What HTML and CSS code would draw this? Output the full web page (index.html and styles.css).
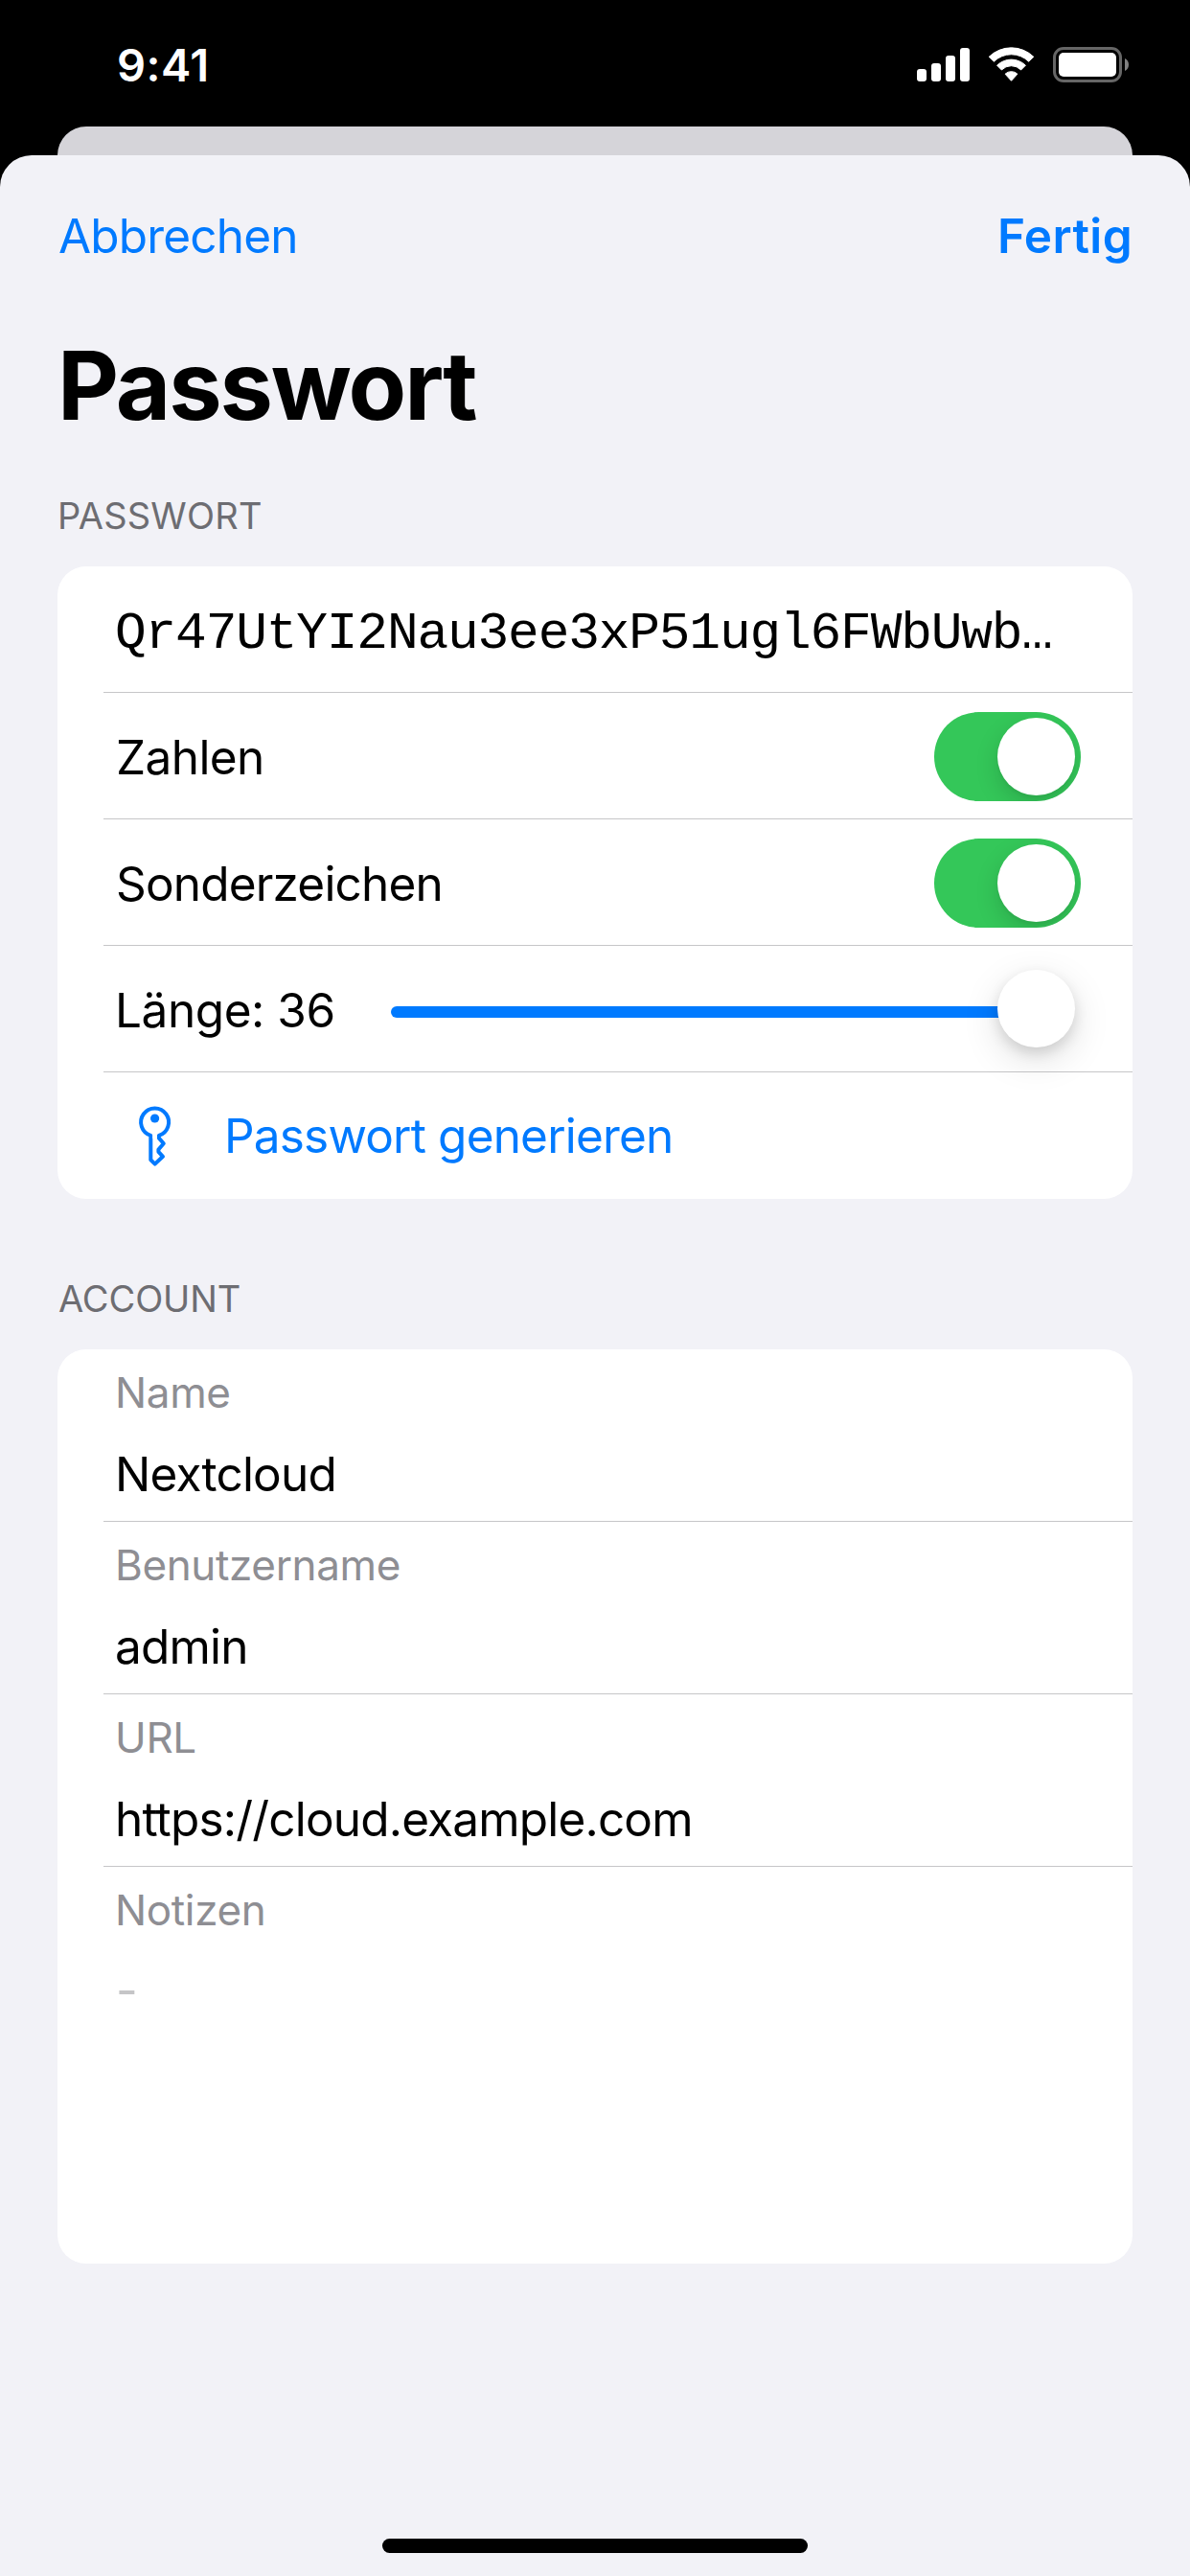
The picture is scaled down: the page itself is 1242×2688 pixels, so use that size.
FILE: index.html
```html
<!DOCTYPE html>
<html lang="de">
<head>
<meta charset="utf-8">
<title>Passwort</title>
<link rel="stylesheet" href="styles.css">
</head>
<body>
<div class="status-bar">
  <span class="time">9:41</span>
  <svg class="status-icons" width="222" height="38" viewBox="957 49 222 38" aria-hidden="true">
    <g fill="#fff">
      <rect x="957" y="72" width="10" height="13" rx="3"/>
      <rect x="972" y="66" width="10" height="19" rx="3"/>
      <rect x="987" y="58" width="10" height="27" rx="3"/>
      <rect x="1002" y="50" width="10" height="35" rx="3"/>
    </g>
    <g fill="#fff" stroke="#fff" stroke-width="1" stroke-linejoin="round">
      <path d="M1032.2 59.3A33.4 33.4 0 0 1 1078.8 59.3L1073.6 64.2A25.8 25.8 0 0 0 1037.4 64.2Z"/>
      <path d="M1040.6 68.2A21.3 21.3 0 0 1 1070.4 68.2L1065.6 73A14 14 0 0 0 1045.4 73Z"/>
      <path d="M1049.1 77.2A9.3 9.3 0 0 1 1061.9 77.2L1055.5 84.3Z"/>
    </g>
    <rect x="1100.5" y="50.5" width="69" height="34" rx="9.5" fill="none" stroke="#666" stroke-width="3"/>
    <rect x="1105" y="55" width="60" height="25" rx="5" fill="#fff"/>
    <path d="M1174 61C1176.400 62 1178 64.500 1178 67.500S1176.400 73 1174 74Z" fill="#808080"/>
  </svg>
</div>
<div class="sheet-behind"></div>
<main class="sheet">
  <nav class="nav">
    <a class="cancel">Abbrechen</a>
    <a class="done">Fertig</a>
  </nav>
  <h1 class="title">Passwort</h1>

  <h2 class="section-title">PASSWORT</h2>
  <section class="card">
    <div class="row row-password"><span class="password">Qr47UtYI2Nau3ee3xP51ugl6FWbUwb…</span></div>
    <div class="row"><span class="zahlen">Zahlen</span><span class="toggle"><span class="knob"></span></span></div>
    <div class="row"><span>Sonderzeichen</span><span class="toggle"><span class="knob"></span></span></div>
    <div class="row row-slider">
      <span class="length">Länge: 36</span>
      <span class="slider"><span class="track"></span><span class="knob slider-knob"></span></span>
    </div>
    <div class="row row-action">
      <svg class="key" width="37" height="66" viewBox="143 1152 37 66" aria-hidden="true">
        <path d="M157.300 1184.800A14.500 14.500 0 1 1 165.900 1184.800V1187.600L170.800 1193.300L165.400 1199.500V1201.800L170 1206.800L161.700 1214.600L157.300 1210.300Z" fill="none" stroke="#007aff" stroke-width="4" stroke-linejoin="round"/>
        <rect x="159.300" y="1182" width="4.600" height="6" fill="#fff"/>
        <circle cx="161.600" cy="1167" r="4.600" fill="#007aff"/>
      </svg>
      <span>Passwort generieren</span>
    </div>
  </section>

  <h2 class="section-title account">ACCOUNT</h2>
  <section class="card">
    <div class="field"><label>Name</label><span>Nextcloud</span></div>
    <div class="field"><label>Benutzername</label><span>admin</span></div>
    <div class="field"><label>URL</label><span>https://cloud.example.com</span></div>
    <div class="field notes"><label>Notizen</label><span class="placeholder">-</span></div>
  </section>
  <div class="home-indicator"></div>
</main>
</body>
</html>
```
FILE: styles.css
```css
* { box-sizing: border-box; }

body {
  margin: 0;
  width: 1242px;
  height: 2688px;
  display: flex;
  flex-direction: column;
  overflow: hidden;
  background: #000;
  color: #000;
  font: 400 49.5px/60px Inter, "Liberation Sans", sans-serif;
  letter-spacing: -0.82px;
  white-space: nowrap;
}

.status-bar {
  height: 132px;
  padding: 39px 63px 0 122px;
  display: flex;
  justify-content: space-between;
  align-items: flex-start;
}
.time {
  color: #fff;
  font-size: 47px;
  font-weight: 600;
  line-height: 57px;
  letter-spacing: 0.48px;
}
.status-icons { margin-top: 10px; }

.sheet-behind {
  height: 30px;
  margin: 0 60px;
  border-radius: 30px 30px 0 0;
  background: #d5d4d9;
}
.sheet {
  flex: 1;
  display: flex;
  flex-direction: column;
  padding: 0 60px 24px;
  border-radius: 33px 33px 0 0;
  background: #f2f2f7;
}

.nav {
  height: 180px;
  padding: 54px 0 0 1px;
  display: flex;
  justify-content: space-between;
  align-items: flex-start;
  color: #007aff;
}
.done { font-weight: 600; letter-spacing: 0.39px; }

.title {
  margin: 0;
  font-size: 99px;
  font-weight: 700;
  line-height: 120px;
  letter-spacing: -2.1px;
}

.section-title {
  margin: 53px 0 30px;
  color: #6d6d72;
  font-size: 38px;
  font-weight: 400;
  line-height: 46px;
  letter-spacing: 0.22px;
}
.section-title.account { margin-top: 81px; padding-left: 1px; letter-spacing: -0.1px; }

.card {
  border-radius: 30px;
  background: #fff;
  overflow: hidden;
}
.row {
  height: 132px;
  margin-left: 48px;
  padding: 3px 54px 0 13px;
  display: flex;
  align-items: center;
  justify-content: space-between;
  border-bottom: 1px solid #c6c6c8;
}
.zahlen { letter-spacing: -0.6px; }
.row-password { padding: 40px 60px 0 12px; align-items: flex-start; }
.password {
  font-family: "Liberation Mono", monospace;
  font-size: 54.5px;
  line-height: 61px;
  letter-spacing: -1.16px;
}

.toggle {
  width: 153px;
  height: 93px;
  margin-bottom: 1px;
  padding: 6px;
  display: flex;
  justify-content: flex-end;
  border-radius: 47px;
  background: #34c759;
  overflow: hidden;
}
.knob {
  width: 81px;
  height: 81px;
  border-radius: 50%;
  background: #fff;
  box-shadow: 0 9px 24px rgba(0, 0, 0, 0.15), 0 3px 3px rgba(0, 0, 0, 0.04);
}

.row-slider { padding-left: 12px; padding-right: 60px; }
.length { letter-spacing: -0.44px; }
.slider {
  position: relative;
  width: 714px;
  height: 84px;
  padding: 38px 2px 0 0;
}
.track {
  display: block;
  height: 12px;
  border-radius: 6px;
  background: #007aff;
}
.slider-knob {
  position: absolute;
  top: 0;
  right: 0;
  box-shadow: 0 12px 39px rgba(0, 0, 0, 0.13), 0 6px 14px rgba(0, 0, 0, 0.12);
}

.row-action {
  padding: 0 0 0 35px;
  justify-content: flex-start;
  gap: 54px;
  border-bottom: 0;
  color: #007aff;
}

.field {
  height: 180px;
  margin-left: 48px;
  padding: 18px 0 0 12px;
  display: flex;
  flex-direction: column;
  gap: 28px;
  border-bottom: 1px solid #c6c6c8;
}
.field label {
  color: #8e8e93;
  font-size: 44px;
  line-height: 54px;
  letter-spacing: -0.36px;
}
.field.notes { height: 414px; border-bottom: 0; }
.placeholder { margin-top: -2px; padding-left: 1px; color: #c5c5c7; }

.home-indicator {
  width: 444px;
  height: 15px;
  margin: auto auto 0;
  border-radius: 8px;
  background: #000;
}
```
